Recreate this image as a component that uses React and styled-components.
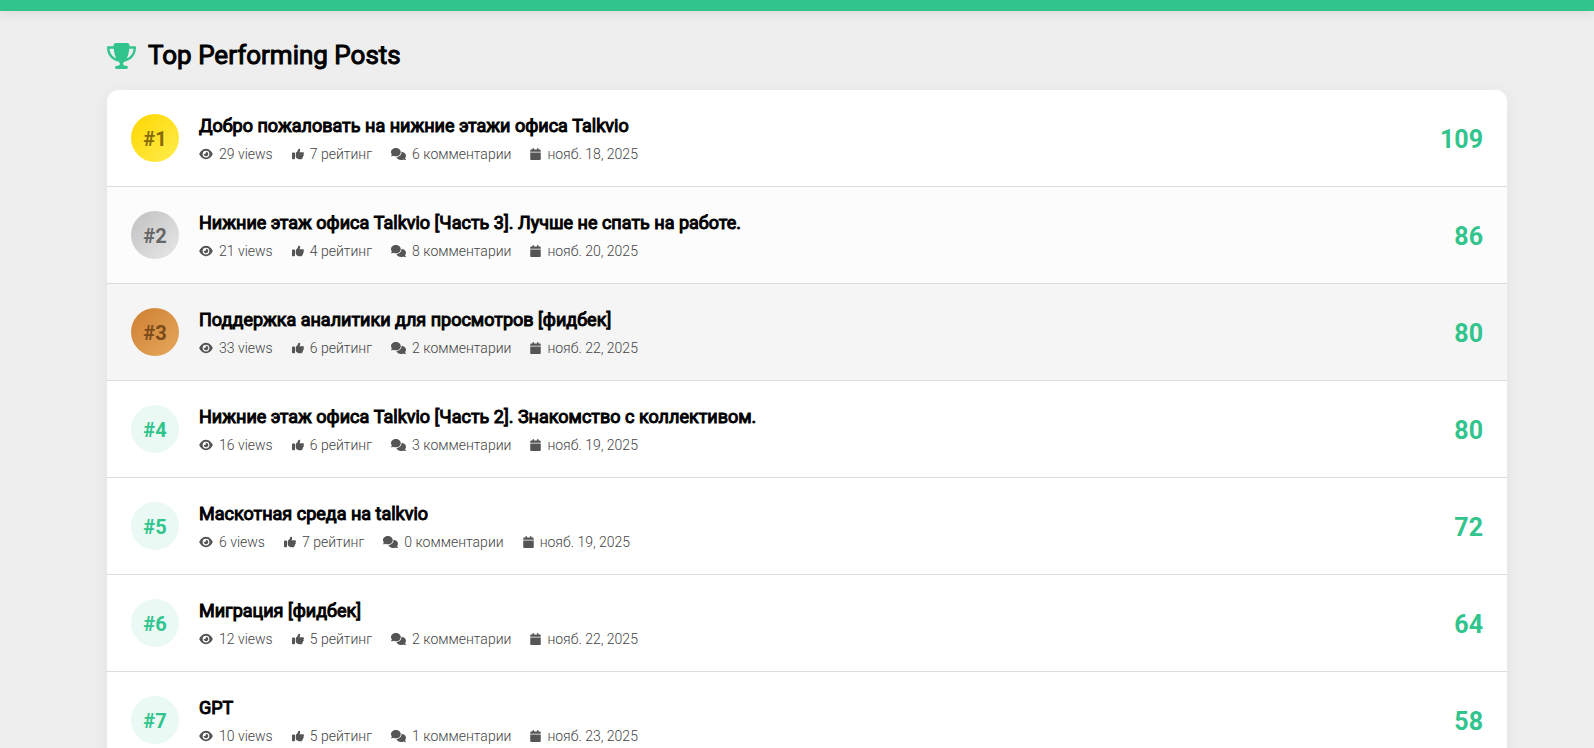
import React from "react"
import styled, { createGlobalStyle } from "styled-components"
import { FaTrophy, FaEye, FaThumbsUp, FaComments, FaCalendar } from "react-icons/fa6"

// common
const accentColor = "#31c48d"
const pageBg = "#eeeeee"
const borderColor = "#dddddd"
const mutedColor = "#444444"
const iconColor = "#555555"

const GlobalStyle = createGlobalStyle`
    * {
        box-sizing:border-box;
    }
    body {
        margin:0;
        background-color:${pageBg};
        color:#000000;
        font-family:Roboto, "Noto Sans", sans-serif;
    }
`;

const TopBar = styled.header`
    height:11px;
    background-color:${accentColor};
    box-shadow:0 2px 12px rgba(0, 0, 0, 0.1);
`;
const Shell = styled.div`
    padding-left:20px;
`;
const Page = styled.main`
    max-width:1440px;
    margin:0 auto;
    padding:28px 20px;
`;
const PageTitle = styled.h1`
    display:flex;
    align-items:center;
    gap:12px;
    margin:0 0 18px;
    font-size:26px;
    line-height:33px;
    font-weight:400;
    -webkit-text-stroke:1px currentColor;

    svg{
        flex:none;
        width:29px;
        height:26px;
        color:${accentColor};
        -webkit-text-stroke:0;
    }
`;
const PostList = styled.ol`
    list-style:none;
    margin:0;
    padding:0;
    overflow:hidden;
    border-radius:12px;
    background-color:#ffffff;
    box-shadow:0 4px 20px rgba(0, 0, 0, 0.05);
`;
const PostItem = styled.li`
    display:flex;
    align-items:center;
    gap:20px;
    padding:24px;
    border-bottom:1px solid ${borderColor};
    background-color:${props => props.$bg || "#ffffff"};
`;
const Rank = styled.div`
    flex:none;
    width:48px;
    height:48px;
    border-radius:50%;
    font-size:20px;
    font-weight:700;
    line-height:50px;
    text-align:center;
    color:${props => props.$color};
    background:${props => props.$bg};
`;
const PostBody = styled.div`
    flex:1;
    min-width:0;
`;
const PostTitle = styled.h2`
    margin:0 0 8px;
    font-size:18px;
    line-height:24px;
    font-weight:400;
    -webkit-text-stroke:1px currentColor;
`;
const Meta = styled.div`
    display:flex;
    flex-wrap:wrap;
    gap:19px;
    font-size:14px;
    line-height:16px;
    font-weight:300;
    color:${mutedColor};
`;
const MetaItem = styled.span`
    display:inline-flex;
    align-items:center;
    gap:6px;

    svg{
        flex:none;
        width:${props => props.$iconWidth}px;
        height:12px;
        color:${iconColor};
    }
`;
const Score = styled.div`
    height:48px;
    font-size:25px;
    line-height:51px;
    font-weight:700;
    color:${accentColor};
`;

// medals for the first three places, everyone else gets the default one
const medals = {
    1: { color: "#856a08", bg: "linear-gradient(135deg, #ffd700, #ffed4e)" },
    2: { color: "#666666", bg: "linear-gradient(135deg, #c0c0c0, #e8e8e8)" },
    3: { color: "#7a4a1a", bg: "linear-gradient(135deg, #cd7f32, #e6a85c)" },
}
const defaultMedal = { color: accentColor, bg: "#eaf9f4" }

const posts = [
    { title: "Добро пожаловать на нижние этажи офиса Talkvio", views: 29, rating: 7, comments: 6, date: "нояб. 18, 2025", score: 109 },
    { title: "Нижние этаж офиса Talkvio [Часть 3]. Лучше не спать на работе.", views: 21, rating: 4, comments: 8, date: "нояб. 20, 2025", score: 86, bg: "#fcfcfc" },
    { title: "Поддержка аналитики для просмотров [фидбек]", views: 33, rating: 6, comments: 2, date: "нояб. 22, 2025", score: 80, bg: "#f5f5f5" },
    { title: "Нижние этаж офиса Talkvio [Часть 2]. Знакомство с коллективом.", views: 16, rating: 6, comments: 3, date: "нояб. 19, 2025", score: 80 },
    { title: "Маскотная среда на talkvio", views: 6, rating: 7, comments: 0, date: "нояб. 19, 2025", score: 72 },
    { title: "Миграция [фидбек]", views: 12, rating: 5, comments: 2, date: "нояб. 22, 2025", score: 64 },
    { title: "GPT", views: 10, rating: 5, comments: 1, date: "нояб. 23, 2025", score: 58 },
]

function Post({ post, place }) {
    const medal = medals[place] || defaultMedal
    return (
        <PostItem $bg={post.bg}>
            <Rank $color={medal.color} $bg={medal.bg}>#{place}</Rank>
            <PostBody>
                <PostTitle>{post.title}</PostTitle>
                <Meta>
                    <MetaItem $iconWidth={14}><FaEye />{post.views} views</MetaItem>
                    <MetaItem $iconWidth={12}><FaThumbsUp />{post.rating} рейтинг</MetaItem>
                    <MetaItem $iconWidth={15}><FaComments />{post.comments} комментарии</MetaItem>
                    <MetaItem $iconWidth={11}><FaCalendar />{post.date}</MetaItem>
                </Meta>
            </PostBody>
            <Score>{post.score}</Score>
        </PostItem>
    )
}

function App() {
    return (
        <>
            <GlobalStyle />
            <TopBar />
            <Shell>
                <Page>
                    <PageTitle><FaTrophy />Top Performing Posts</PageTitle>
                    <PostList>
                        {posts.map((post, index) => <Post post={post} place={index + 1} key={index} />)}
                    </PostList>
                </Page>
            </Shell>
        </>
    )
}

export default App
